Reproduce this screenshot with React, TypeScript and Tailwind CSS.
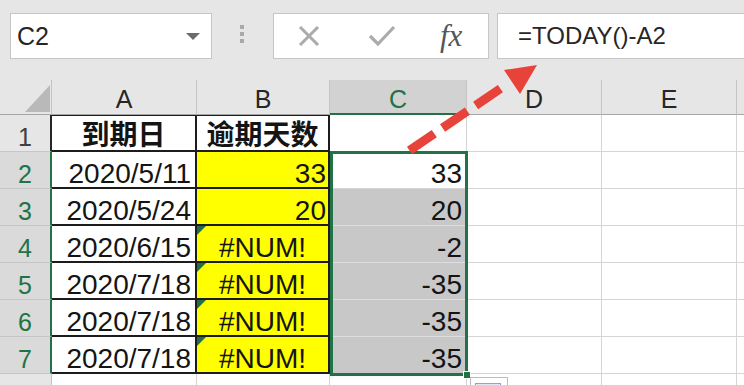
import React from 'react';

const rows = [
  { a: '2020/5/11', b: '33', c: '33' },
  { a: '2020/5/24', b: '20', c: '20' },
  { a: '2020/6/15', b: '#NUM!', c: '-2' },
  { a: '2020/7/18', b: '#NUM!', c: '-35' },
  { a: '2020/7/18', b: '#NUM!', c: '-35' },
  { a: '2020/7/18', b: '#NUM!', c: '-35' },
];

function Toolbar() {
  return (
    <div className="h-[80px] flex items-start pt-[13px]">
      {/* name box */}
      <div className="ml-[10px] w-[202px] h-[46px] bg-white border border-[#c6c6c6] flex items-center justify-between pl-[6px] pr-[11px]">
        <span className="text-[25px] leading-none text-[#262626]">C2</span>
        <svg width="14" height="7" viewBox="0 0 14 7">
          <polygon points="0,0 14,0 7,7" fill="#6b6b6b" />
        </svg>
      </div>
      {/* splitter dots */}
      <div className="ml-[28px] mt-[12px] flex flex-col gap-[3px]">
        <div className="w-[4px] h-[4px] bg-[#a9a9a9]" />
        <div className="w-[4px] h-[4px] bg-[#a9a9a9]" />
        <div className="w-[4px] h-[4px] bg-[#a9a9a9]" />
      </div>
      {/* cancel / enter / fx */}
      <div className="ml-[29px] w-[216px] h-[46px] bg-white border border-[#c6c6c6] flex items-center">
        <svg className="ml-[23px]" width="24" height="20" viewBox="0 0 24 20">
          <path d="M3 1 L21 19 M21 1 L3 19" stroke="#ababab" strokeWidth="3" fill="none" />
        </svg>
        <svg className="ml-[47px]" width="28" height="22" viewBox="0 0 28 22">
          <path d="M2 11 L10 19 L26 2" stroke="#ababab" strokeWidth="3.2" fill="none" />
        </svg>
        <span className="ml-[44px] font-['Liberation_Serif',serif] italic text-[31px] leading-none text-[#555] pb-[2px]">fx</span>
      </div>
      {/* formula */}
      <div className="ml-[8px] flex-1 h-[46px] bg-white border border-r-0 border-[#c6c6c6] flex items-center pl-[20px] text-[24px] text-[#262626]">
        =TODAY()-A2
      </div>
    </div>
  );
}

function ColHead({ label, active }: { label: string; active?: boolean }) {
  return (
    <div
      className={
        active
          ? 'bg-[#d2d2d2] border-r border-r-[#c4c4c4] border-b-2 border-b-[#217346] text-center text-[25px] leading-[28px] pt-[5px] text-[#217346]'
          : 'bg-[#e6e6e6] border-r border-r-[#c4c4c4] border-b border-b-[#a6a6a6] text-center text-[25px] leading-[28px] pt-[5px] text-[#262626]'
      }
    >
      {label}
    </div>
  );
}

function RowHead({ n, active }: { n: number; active?: boolean }) {
  return (
    <div
      className={
        active
          ? 'bg-[#dadada] border-b border-b-[#c6c6c6] border-r-2 border-r-[#217346] text-center text-[25px] leading-[28px] pt-[8px] text-[#217346]'
          : 'bg-[#e6e6e6] border-b border-b-[#c6c6c6] border-r-2 border-r-[#262626] text-center text-[25px] leading-[28px] pt-[8px] text-[#404040]'
      }
    >
      {n}
    </div>
  );
}

function Sheet() {
  return (
    <div className="grid grid-cols-[52px_145px_133px_137px_135px_135px_1fr] grid-rows-[35px_repeat(7,37px)_1fr] h-[305px] bg-white text-[#141414]">
      {/* header row */}
      <div className="bg-[#e6e6e6] border-r border-b border-r-[#c4c4c4] border-b-[#a6a6a6] flex items-end justify-end pr-[1px] pb-[2px]">
        <svg width="25" height="27" viewBox="0 0 25 27">
          <polygon points="0,27 25,27 25,0" fill="#b9b9b9" />
        </svg>
      </div>
      <ColHead label="A" />
      <ColHead label="B" />
      <ColHead label="C" active />
      <ColHead label="D" />
      <ColHead label="E" />
      <div className="bg-[#e6e6e6] border-b border-b-[#a6a6a6]" />

      {/* row 1 */}
      <RowHead n={1} />
      <div className="border-r-2 border-b-2 border-t border-[#1c1c1c] text-center font-['Noto_Sans_CJK_SC',sans-serif] font-bold text-[28px] leading-[34px]">
        到期日
      </div>
      <div className="border-r-2 border-b-2 border-t border-[#1c1c1c] text-center font-['Noto_Sans_CJK_SC',sans-serif] font-bold text-[28px] leading-[34px]">
        逾期天数
      </div>
      <div className="border-r border-b border-[#d4d4d4]" />
      <div className="border-r border-b border-[#d4d4d4]" />
      <div className="border-r border-b border-[#d4d4d4]" />
      <div className="border-b border-[#d4d4d4]" />

      {rows.map((r, i) => (
        <React.Fragment key={i}>
          <RowHead n={i + 2} active />
          <div className="border-r-2 border-b-2 border-[#1c1c1c] text-right pr-[4px] pt-[6px] text-[28px] leading-[31px]">
            {r.a}
          </div>
          <div
            className={`relative bg-[#ffff00] border-r-2 border-b-2 border-[#1c1c1c] pt-[6px] text-[28px] leading-[31px] ${
              r.b === '#NUM!' ? 'text-center' : 'text-right pr-[2px]'
            }`}
          >
            {r.b === '#NUM!' && (
              <div className="absolute left-0 top-0 w-0 h-0 border-t-[9px] border-r-[9px] border-t-[#1e7145] border-r-transparent" />
            )}
            {r.b}
          </div>
          <div
            className={`border-r border-b text-right pr-[4px] pt-[6px] text-[28px] leading-[31px] ${
              i === 0 ? 'bg-white border-[#d4d4d4]' : 'bg-[#c8c8c8] border-[#dedede]'
            }`}
          >
            {r.c}
          </div>
          <div className="border-r border-b border-[#d4d4d4]" />
          <div className="border-r border-b border-[#d4d4d4]" />
          <div className="border-b border-[#d4d4d4]" />
        </React.Fragment>
      ))}

      {/* row 8 */}
      <div className="bg-[#e6e6e6] border-r border-r-[#c4c4c4]" />
      <div className="border-r border-[#d4d4d4]" />
      <div className="border-r border-[#d4d4d4]" />
      <div className="border-r border-[#d4d4d4]" />
      <div className="border-r border-[#d4d4d4]" />
      <div className="border-r border-[#d4d4d4]" />
      <div />
    </div>
  );
}

function Arrow() {
  return (
    <svg className="absolute left-0 top-0 pointer-events-none" width="744" height="385" viewBox="0 0 744 385">
      <line
        x1="409.5"
        y1="150.5"
        x2="500.4"
        y2="88.6"
        stroke="#e8433a"
        strokeWidth="9"
        strokeDasharray="30 10"
      />
      <polygon points="504,70 537,65 520,94" fill="#e8433a" />
    </svg>
  );
}

export default function App() {
  return (
    <div className="relative w-[744px] h-[385px] overflow-hidden bg-[#e6e6e6] font-['Liberation_Sans','Noto_Sans_CJK_SC',sans-serif]">
      <Toolbar />
      <Sheet />

      {/* selection C2:C7 */}
      <div className="absolute left-[330px] top-[151px] w-[138px] h-[225px] border-[3px] border-[#217346] pointer-events-none" />
      <div className="absolute left-[463px] top-[371px] w-[8px] h-[8px] bg-[#217346] border border-white" />

      {/* paste options button, cut off */}
      <div className="absolute left-[470px] top-[377px] w-[38px] h-[14px] bg-white border border-[#bdbdbd] pt-[5px] pl-[4px]">
        <div className="w-[26px] h-[6px] bg-[#dfe7f2] border border-[#8ea6c6]" />
      </div>

      <Arrow />
    </div>
  );
}
